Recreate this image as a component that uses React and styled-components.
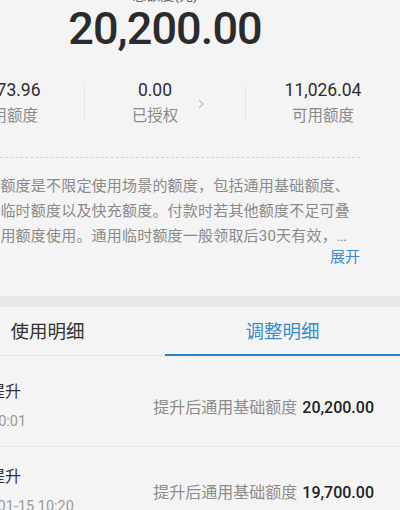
import React from 'react';
import styled, { createGlobalStyle } from 'styled-components';

const GlobalStyle = createGlobalStyle`
  html, body {
    margin: 0;
    padding: 0;
    background: #f4f4f4;
    overflow: hidden;
  }
  body {
    font-family: Roboto, "Noto Sans CJK SC", sans-serif;
  }
`;

const Page = styled.div`
  width: 470px;
  margin-left: -70px;
  background: #f4f4f4;
`;

const Header = styled.div`
  display: flex;
  flex-direction: column;
  align-items: center;
`;

const TotalLabel = styled.div`
  margin-top: -13px;
  font-size: 14px;
  line-height: 16px;
  color: #666;
`;

const TotalValue = styled.div`
  font-size: 45px;
  line-height: 52px;
  font-weight: 500;
  color: #2b2b2b;
  letter-spacing: -0.9px;
`;

const StatsRow = styled.div`
  display: flex;
  align-items: center;
  margin-top: 24px;
`;

const StatCol = styled.div`
  flex: 1;
  display: flex;
  justify-content: center;
  align-items: center;
  gap: 20px;
  padding-left: ${({ $shift }) => $shift || 0}px;
`;

const StatText = styled.div`
  display: flex;
  flex-direction: column;
  align-items: center;
`;

const StatValue = styled.div`
  font-size: 17.5px;
  line-height: 22px;
  color: #2e2e2e;
`;

const StatLabel = styled.div`
  margin-top: 3px;
  font-size: 15.5px;
  line-height: 24px;
  color: #8a8a8a;
`;

const Divider = styled.div`
  width: 1px;
  height: 35px;
  background: #e2e2e2;
`;

const Info = styled.div`
  padding: 0 40px 31px 40px;
`;

const Dashed = styled.div`
  margin-top: 29px;
  border-top: 1px dashed #d2d2d2;
`;

const Desc = styled.p`
  margin: 16px 0 0;
  font-size: 15px;
  line-height: 25px;
  letter-spacing: 0.2px;
  color: #8a8a8a;
`;

const More = styled.div`
  text-align: right;
  font-size: 15px;
  line-height: 16px;
  color: #3a8bd0;
`;

const Band = styled.div`
  height: 11px;
  background: #e8e7ec;
`;

const TabBar = styled.div`
  display: flex;
  border-bottom: 1px solid #e4e4e4;
`;

const Tab = styled.div`
  flex: 1;
  height: 49px;
  display: flex;
  align-items: center;
  justify-content: center;
  padding-bottom: 2px;
  box-sizing: border-box;
  font-size: 18.5px;
  color: ${({ $active }) => ($active ? '#3a8bcb' : '#333')};
  border-bottom: 2px solid ${({ $active }) => ($active ? '#2a7fc2' : 'transparent')};
  margin-bottom: -1px;
`;

const List = styled.div`
  margin-top: 6px;
`;

const Row = styled.div`
  display: flex;
  justify-content: space-between;
  align-items: center;
  padding: 19px 26px 15px 27px;
  border-bottom: 1px solid #e6e6e6;
`;

const RowLeft = styled.div`
  display: flex;
  flex-direction: column;
  gap: 10px;
`;

const RowTitle = styled.div`
  font-size: 16px;
  line-height: 22px;
  color: #333;
`;

const RowDate = styled.div`
  font-size: 14.5px;
  line-height: 18px;
  color: #9a9a9a;
  margin-left: 4px;
`;

const RowRight = styled.div`
  font-size: 16px;
  color: #8c8c8c;
`;

const RowAmount = styled.span`
  margin-left: 5px;
  font-weight: 500;
  color: #222;
`;

const Chevron = () => (
  <svg width="6" height="10" viewBox="0 0 6 10">
    <path d="M1 1l4 4-4 4" fill="none" stroke="#bcbcbc" strokeWidth="1.2" />
  </svg>
);

const records = [
  { id: 1, title: '额度提升', date: '今天10:01', amount: '20,200.00' },
  { id: 2, title: '额度提升', date: '2021-01-15 10:20', amount: '19,700.00' },
];

const App = () => (
  <Page>
    <GlobalStyle />
    <Header>
      <TotalLabel>总额度(元)</TotalLabel>
      <TotalValue>20,200.00</TotalValue>
    </Header>
    <StatsRow>
      <StatCol>
        <StatText>
          <StatValue>9,173.96</StatValue>
          <StatLabel>已用额度</StatLabel>
        </StatText>
      </StatCol>
      <Divider />
      <StatCol $shift={6}>
        <StatText>
          <StatValue>0.00</StatValue>
          <StatLabel>已授权</StatLabel>
        </StatText>
        <Chevron />
      </StatCol>
      <Divider />
      <StatCol>
        <StatText>
          <StatValue>11,026.04</StatValue>
          <StatLabel>可用额度</StatLabel>
        </StatText>
      </StatCol>
    </StatsRow>
    <Info>
      <Dashed />
      <Desc>
        通用额度是不限定使用场景的额度，包括通用基础额度、通用临时额度以及快充额度。付款时若其他额度不足可叠加通用额度使用。通用临时额度一般领取后30天有效，…
      </Desc>
      <More>展开</More>
    </Info>
    <Band />
    <TabBar>
      <Tab>使用明细</Tab>
      <Tab $active>调整明细</Tab>
    </TabBar>
    <List>
      {records.map((r) => (
        <Row key={r.id}>
          <RowLeft>
            <RowTitle>{r.title}</RowTitle>
            <RowDate>{r.date}</RowDate>
          </RowLeft>
          <RowRight>
            提升后通用基础额度<RowAmount>{r.amount}</RowAmount>
          </RowRight>
        </Row>
      ))}
    </List>
  </Page>
);

export default App;
